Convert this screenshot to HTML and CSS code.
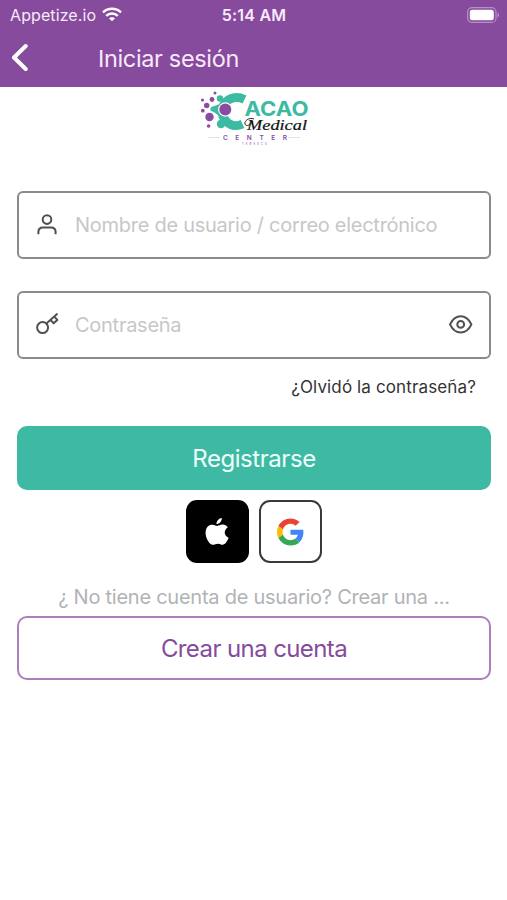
FILE: index.html
```html
<!DOCTYPE html>
<html lang="es">
<head>
    <meta charset="UTF-8">
    <meta name="viewport" content="width=device-width, initial-scale=1.0">
    <title>Iniciar sesión</title>
    <link rel="stylesheet" href="styles.css">
</head>
<body>
    <header class="header">
        <div class="status-bar">
            <div class="carrier">
                <span>Appetize.io</span>
                <svg class="wifi" width="20" height="15" viewBox="0 0 20 15">
                    <g fill="none" stroke="#fff" stroke-width="2.5">
                        <path d="M1 5.4C6 .6 14 .6 19 5.4"/>
                        <path d="M4.2 8.8c3.3-3 8.3-3 11.6 0"/>
                    </g>
                    <path d="M10 14.2 6.9 11.3c1.8-1.5 4.4-1.5 6.2 0z" fill="#fff"/>
                </svg>
            </div>
            <span class="time">5:14 AM</span>
            <svg class="battery" width="33" height="16" viewBox="0 0 33 16">
                <rect x=".6" y=".6" width="28.4" height="14.8" rx="4.5" fill="none" stroke="#b78fc6" stroke-width="1.2"/>
                <rect x="2.8" y="2.8" width="24" height="10.4" rx="2.5" fill="#fff"/>
                <path d="M30.5 5.5c2 .8 2 4.2 0 5z" fill="#b78fc6"/>
            </svg>
        </div>
        <div class="nav-bar">
            <a class="back" href="#" aria-label="Volver">
                <svg width="18" height="30" viewBox="0 0 18 30">
                    <path d="M15.7 3 4 14.5 15.7 26" fill="none" stroke="#fff" stroke-width="4" stroke-linecap="round" stroke-linejoin="round"/>
                </svg>
            </a>
            <h1>Iniciar sesión</h1>
        </div>
    </header>

    <main class="container">
        <svg class="logo" width="130" height="64" viewBox="0 0 130 64">
            <g fill="#8a4ba0">
                <circle cx="25" cy="7" r="1.5"/>
                <circle cx="12.5" cy="14" r="1.6"/>
                <circle cx="22" cy="13.5" r="2.4"/>
                <circle cx="16.7" cy="19.5" r="2.7"/>
                <circle cx="12.8" cy="24.7" r="1.9"/>
                <circle cx="19.5" cy="31" r="4.2"/>
                <circle cx="18.6" cy="40" r="1.8"/>
            </g>
            <path d="M54.5 13.5C47 10 39 11.500 35 17c-4 5.5-3.5 13 .5 17.5 4 5 10.5 6.5 17 3.5" fill="none" stroke="#3cbaa2" stroke-width="9"/>
            <g fill="#3cbaa2">
                <circle cx="30" cy="12.5" r="3.2"/>
                <circle cx="23" cy="23" r="2.6"/>
                <circle cx="31" cy="38" r="4.2"/>
                <path d="M23 20.5 35 16v18l-12-8.5z"/>
            </g>
            <circle cx="35.3" cy="23.5" r="7.2" fill="#fff"/>
            <circle cx="35.3" cy="23.5" r="6" fill="#8a4ba0"/>
            <text class="logo-name" x="54.5" y="30" textLength="64" lengthAdjust="spacingAndGlyphs">ACAO</text>
            <path d="M64 33c-5-2-10 2-9 5s6 1 8-3" fill="none" stroke="#222" stroke-width="1"/>
            <text class="logo-script" x="57" y="44" textLength="60" lengthAdjust="spacingAndGlyphs">Medical</text>
            <path d="M18 51.5h12M98 51.5h12" stroke="#ddd0e2" stroke-width=".7"/>
            <text class="logo-center" x="33" y="54" textLength="64">CENTER</text>
            <text class="logo-small" x="52" y="58.8" textLength="25">TABASCO</text>
        </svg>

        <form class="login-form">
            <label class="field">
                <svg class="field-icon" width="24" height="24" viewBox="0 0 24 24">
                    <circle cx="11" cy="6.6" r="4.3"/>
                    <path d="M2.4 21.2V19c0-3 1.6-4.5 4.5-4.5h8.2c2.9 0 4.5 1.5 4.5 4.5v2.2"/>
                </svg>
                <input type="text" name="usuario" placeholder="Nombre de usuario / correo electrónico">
            </label>

            <label class="field">
                <svg class="field-icon" width="24" height="24" viewBox="0 0 24 24">
                    <circle cx="6.6" cy="14.6" r="5.5"/>
                    <path d="M10.4 10.5 21.5.6M14.5 7l3.2 3.3 3.6-3.4-3-3.3"/>
                </svg>
                <input type="password" name="clave" placeholder="Contraseña">
                <svg class="field-icon" width="24" height="24" viewBox="0 0 24 24">
                    <path d="M1 11.4c2.6-5.5 6.400-8.100 10.700-8.100s8.100 2.600 10.700 8.100c-2.600 5.500-6.400 8.100-10.700 8.100S3.600 16.900 1 11.400z"/>
                    <circle cx="11.700" cy="11.400" r="3.400"/>
                </svg>
            </label>

            <a class="forgot" href="#">¿Olvidó la contraseña?</a>
            <button class="btn btn-login" type="button">Registrarse</button>
        </form>

        <div class="social">
            <button class="social-btn apple" type="button" aria-label="Apple">
                <svg width="26" height="29" viewBox="0 0 26 29">
                    <path d="M17.8 1c.2 3.3-2.5 6.2-5.3 6.1C12.200 4.100 15 1.200 17.800 1z" fill="#fff"/>
                    <path d="M23.8 10.600c-4.500 2.600-3.800 8.400.8 10.200-1.200 3.200-3.500 7-6 7-1.900 0-2.400-1.100-4.700-1.100-2.400 0-3.100 1.100-4.900 1.100-4.100 0-8.600-9-7.200-14.400C2.900 9.100 5.800 7.500 8.700 7.700c2 .1 3.300 1.200 4.500 1.200 1.300 0 3.100-1.400 5.600-1.300 2.100.1 3.900 1.200 5 3z" fill="#fff"/>
                </svg>
            </button>
            <button class="social-btn google" type="button" aria-label="Google">
                <svg width="27" height="28" viewBox="0 0 48 48">
                    <path fill="#ea4335" d="M24 9.5c3.54 0 6.71 1.22 9.21 3.6l6.85-6.85C35.9 2.38 30.47 0 24 0 14.62 0 6.51 5.38 2.56 13.22l7.98 6.19C12.43 13.72 17.74 9.5 24 9.5z"/>
                    <path fill="#4285f4" d="M46.98 24.55c0-1.57-.15-3.09-.38-4.55H24v9.02h12.94c-.58 2.96-2.26 5.48-4.78 7.18l7.73 6c4.51-4.18 7.09-10.36 7.09-17.65z"/>
                    <path fill="#fbbc05" d="M10.53 28.59A14.5 14.5 0 0 1 9.77 24c0-1.6.27-3.14.76-4.59l-7.98-6.19A23.9 23.9 0 0 0 0 24c0 3.88.92 7.54 2.56 10.78z"/>
                    <path fill="#34a853" d="M24 48c6.48 0 11.93-2.13 15.89-5.81l-7.73-6c-2.15 1.45-4.92 2.3-8.16 2.3-6.26 0-11.57-4.22-13.47-9.91l-7.98 6.19C6.51 42.62 14.62 48 24 48z"/>
                </svg>
            </button>
        </div>

        <p class="no-account">¿ No tiene cuenta de usuario? Crear una ...</p>
        <button class="btn btn-create" type="button">Crear una cuenta</button>
    </main>
</body>
</html>
```
FILE: styles.css
```css
* {
    box-sizing: border-box;
}
body {
    font-family: Inter, 'Liberation Sans', sans-serif;
    margin: 0;
    min-height: 100vh;
    background-color: #fff;
}
.header {
    height: 87px;
    background-color: #864b9c;
    color: #f8e9fb;
}
.status-bar {
    display: grid;
    grid-template-columns: 1fr auto 1fr;
    align-items: center;
    height: 29px;
    padding: 0 7px 0 10px;
    font-size: 16px;
}
.carrier {
    display: flex;
    align-items: center;
    gap: 6px;
    letter-spacing: 0.1px;
}
.time {
    margin-right: 2px;
    font-weight: 600;
    font-size: 16px;
    letter-spacing: 0.2px;
}
.battery {
    justify-self: end;
}
.nav-bar {
    display: flex;
    align-items: center;
    height: 58px;
    padding-left: 10px;
}
.back {
    display: flex;
    width: 88px;
}
h1 {
    margin: 0;
    font-size: 23.5px;
    font-weight: 400;
    letter-spacing: -0.35px;
}
.container {
    display: flex;
    flex-direction: column;
    padding: 0 16px 0 17px;
}
.logo {
    align-self: center;
    margin: -1px 0 41px 1px;
}
.logo-name {
    font-size: 20px;
    font-weight: 700;
    fill: #3cbaa2;
}
.logo-script {
    font-family: 'Liberation Serif', serif;
    font-size: 15px;
    font-style: italic;
    fill: #111;
    stroke: #111;
    stroke-width: 0.2px;
}
.logo-center {
    font-size: 6.5px;
    font-weight: 600;
    fill: #8a4ba0;
}
.logo-small {
    font-size: 2.8px;
    fill: #8a4ba0;
}
.login-form {
    display: flex;
    flex-direction: column;
}
.field {
    display: flex;
    align-items: center;
    height: 68px;
    margin-bottom: 32px;
    padding: 0 16px 0 17px;
    border: 2px solid #8a8a8a;
    border-radius: 6px;
}
.field + .field {
    margin-bottom: 17px;
}
.field-icon {
    flex: none;
    fill: none;
    stroke: #505050;
    stroke-width: 2;
    stroke-linejoin: round;
}
.field input {
    flex: 1;
    min-width: 0;
    padding: 0 0 0 15px;
    border: none;
    outline: none;
    background: none;
    font-family: inherit;
    font-size: 20px;
    letter-spacing: -0.27px;
}
.field input::placeholder {
    color: #c7c7c7;
    opacity: 1;
}
.forgot {
    align-self: flex-end;
    margin-right: 15px;
    margin-bottom: 28px;
    font-size: 17px;
    line-height: 22px;
    letter-spacing: 0.13px;
    color: #333;
    text-decoration: none;
}
.btn {
    height: 64px;
    padding: 0;
    border: none;
    border-radius: 10px;
    font-family: inherit;
    font-size: 24px;
}
.btn-login {
    background-color: #3ebaa4;
    color: #eefffb;
    letter-spacing: -0.45px;
}
.social {
    display: flex;
    justify-content: center;
    gap: 10px;
    margin: 10px 0 22px;
}
.social-btn {
    display: flex;
    align-items: center;
    justify-content: center;
    width: 63px;
    height: 63px;
    padding: 0 1px 0 0;
    border: 2px solid #3a3a3a;
    border-radius: 11px;
    background-color: #fff;
}
.apple {
    border-color: #000;
    background-color: #000;
}
.no-account {
    margin: 0 0 6px;
    text-align: center;
    font-size: 20px;
    line-height: 25px;
    letter-spacing: -0.25px;
    color: #b0b3b6;
}
.btn-create {
    border: 2px solid #ac7fbc;
    background-color: #fff;
    color: #864b9c;
    letter-spacing: -0.6px;
}
```
